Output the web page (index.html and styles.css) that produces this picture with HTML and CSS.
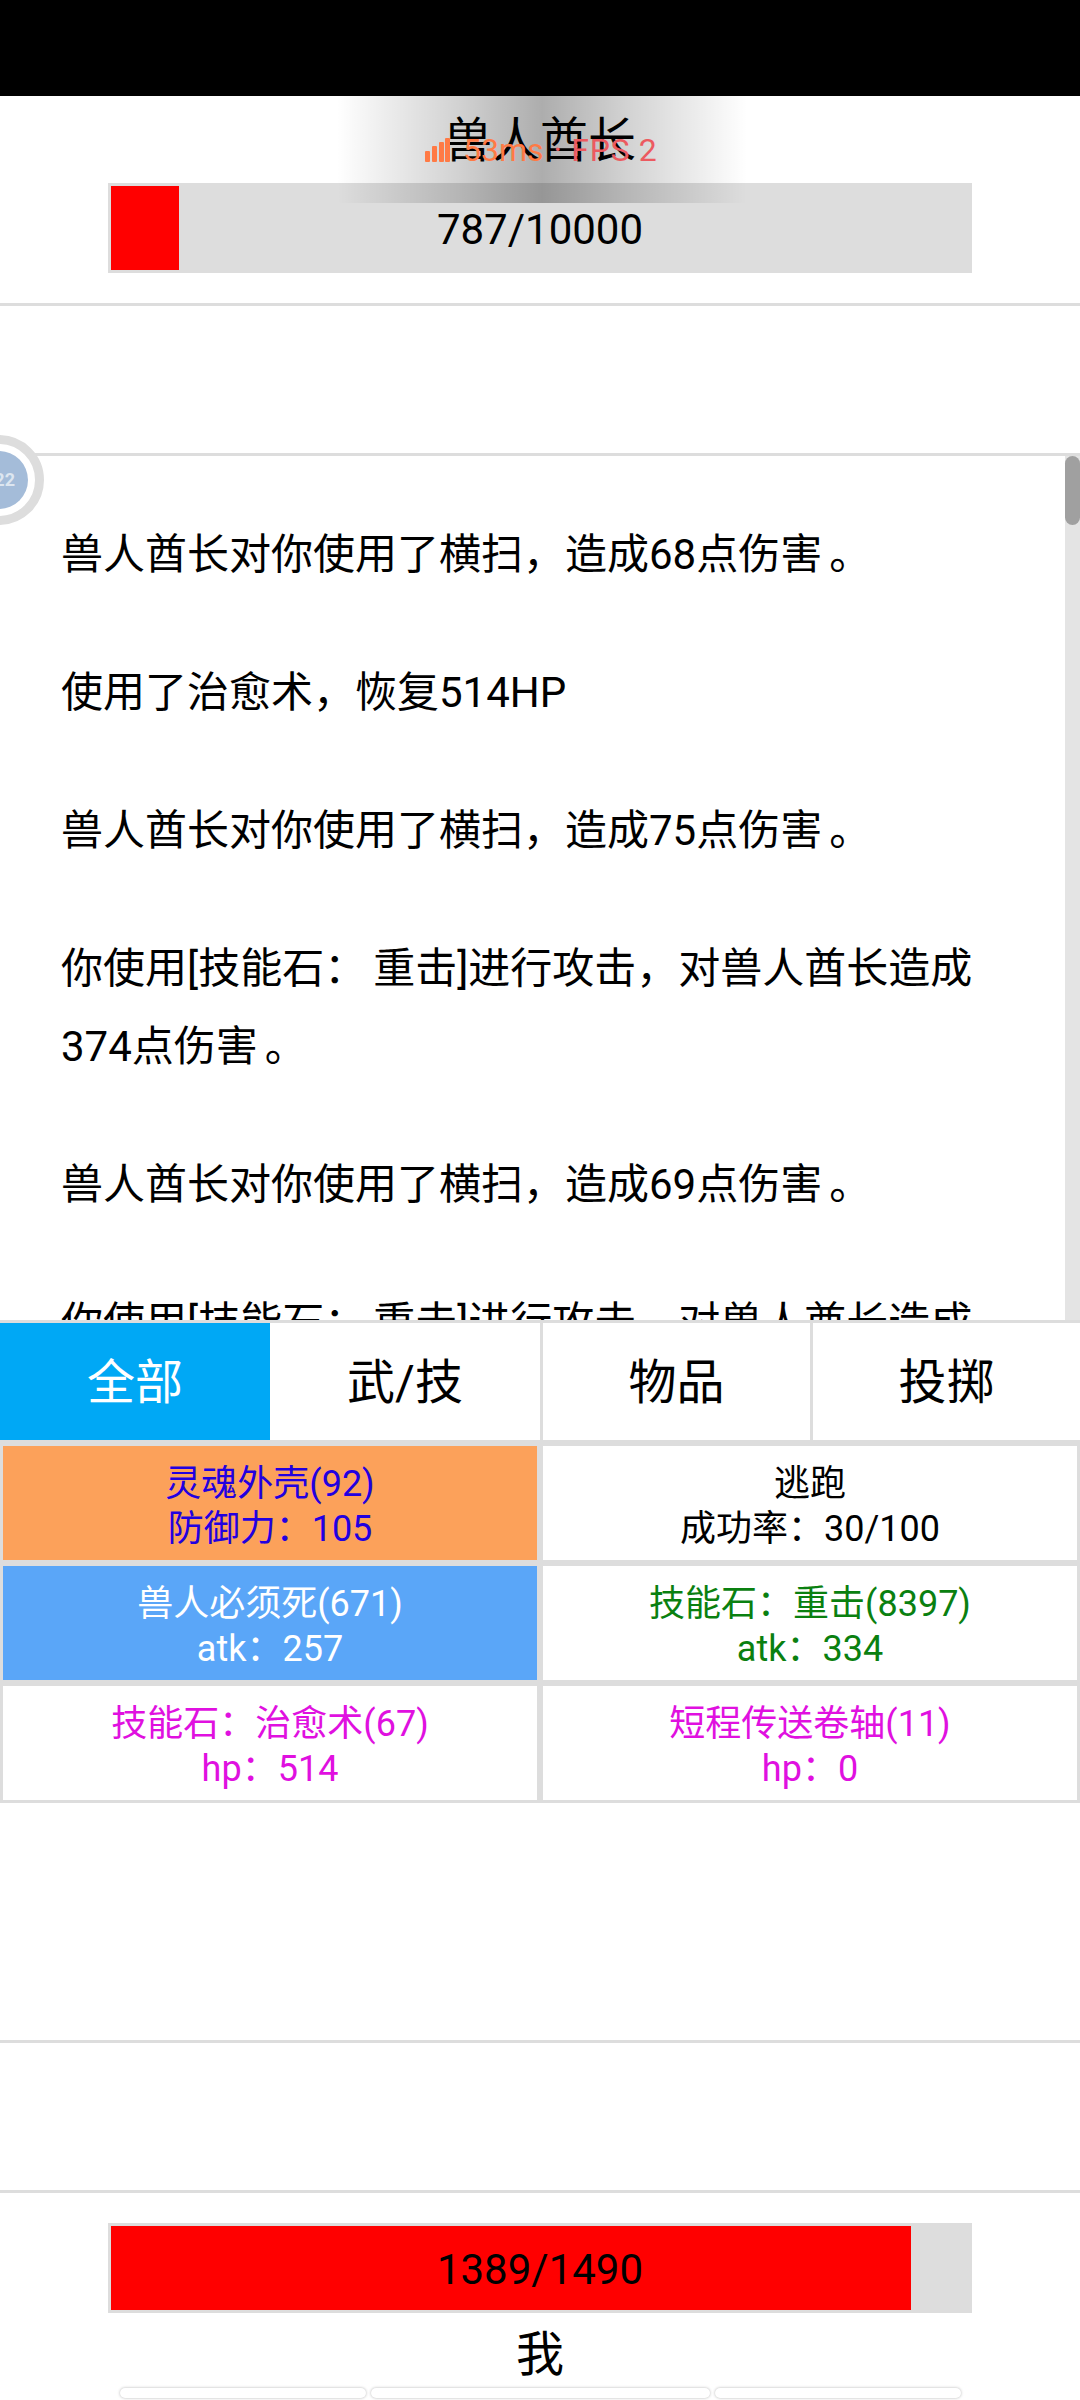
FILE: index.html
```html
<!DOCTYPE html>
<html lang="zh-CN">
<head>
  <meta charset="UTF-8">
  <meta name="viewport" content="width=device-width, initial-scale=1.0">
  <title>兽人酋长</title>
  <link rel="stylesheet" href="styles.css">
</head>
<body>
  <div class="status-bar"></div>

  <section class="enemy">
    <div class="name">兽人酋长</div>
    <div class="hp-bar">
      <div class="hp-fill" style="width: 7.87%"></div>
      <div class="hp-text">787/10000</div>
    </div>
  </section>

  <section class="blank-row"></section>

  <section class="log">
    <div class="log-lines">
      <p>兽人酋长对你使用了横扫，造成68点伤害<span class="stop">。</span></p>
      <p>使用了治愈术，恢复514HP</p>
      <p>兽人酋长对你使用了横扫，造成75点伤害<span class="stop">。</span></p>
      <p>你使用[技能石<span class="colon">：</span>重击]进行攻击，对兽人酋长造成374点伤害<span class="stop">。</span></p>
      <p>兽人酋长对你使用了横扫，造成69点伤害<span class="stop">。</span></p>
      <p>你使用[技能石<span class="colon">：</span>重击]进行攻击，对兽人酋长造成374点伤害<span class="stop">。</span></p>
    </div>
    <div class="scroll-track"><div class="scroll-thumb"></div></div>
  </section>

  <nav class="tabs">
    <div class="tab active">全部</div>
    <div class="tab">武/技</div>
    <div class="tab">物品</div>
    <div class="tab">投掷</div>
  </nav>

  <section class="items">
    <div class="item armor">灵魂外壳(92)<br>防御力<span class="colon">：</span>105</div>
    <div class="item">逃跑<br>成功率<span class="colon">：</span>30/100</div>
    <div class="item weapon">兽人必须死(671)<br>atk<span class="colon">：</span>257</div>
    <div class="item skill">技能石<span class="colon">：</span>重击(8397)<br>atk<span class="colon">：</span>334</div>
    <div class="item magic">技能石<span class="colon">：</span>治愈术(67)<br>hp<span class="colon">：</span>514</div>
    <div class="item magic">短程传送卷轴(11)<br>hp<span class="colon">：</span>0</div>
  </section>

  <section class="spacer-row"></section>
  <section class="blank-row"></section>

  <section class="player">
    <div class="hp-bar">
      <div class="hp-fill" style="width: 93.22%"></div>
      <div class="hp-text">1389/1490</div>
    </div>
    <div class="name me">我</div>
    <div class="menu">
      <div class="menu-btn side"></div>
      <div class="menu-btn mid"></div>
      <div class="menu-btn side"></div>
    </div>
  </section>

  <!-- overlays from the host app -->
  <div class="fps">
    <svg class="fps-icon" width="25" height="24" viewBox="0 0 25 24">
      <rect x="0" y="13" width="5" height="11" rx="1"></rect>
      <rect x="7" y="8" width="5" height="16" rx="1"></rect>
      <rect x="14" y="4" width="5" height="20" rx="1"></rect>
      <rect x="20" y="0" width="5" height="24" rx="1"></rect>
    </svg>
    <span class="fps-ms">53ms</span>
    <span class="fps-count">· FPS 2</span>
  </div>
  <div class="float-ball"><div class="float-core">22</div></div>
</body>
</html>
```

FILE: styles.css
```css
* { box-sizing: border-box; }
html, body { margin: 0; height: 2400px; overflow: hidden; }
body { position: relative; background: #fff; color: #000; font-family: Roboto, "Noto Sans CJK SC", sans-serif; }

.status-bar { height: 96px; background: #000; }

.enemy { height: 210px; border-bottom: 3px solid #ddd; }
.name { height: 87px; line-height: 89px; font-size: 48px; text-align: center; }

.hp-bar { position: relative; width: 864px; height: 90px; margin: 0 auto; padding: 3px; background: #ddd; }
.hp-fill { height: 84px; background: #f00; }
.hp-text { position: absolute; inset: 0; line-height: 94px; font-size: 42px; text-align: center; }

.blank-row { height: 150px; border-bottom: 3px solid #ddd; }

.log { display: flex; height: 864px; overflow: hidden; }
.log-lines { flex: 1; padding: 0 30px 0 61px; font-size: 42px; line-height: 78px; }
.log-lines p { margin: 60px 0; }
.log-lines .colon { margin-right: 7px; }
.stop { padding-left: 7px; }
.colon { font-family: "Noto Sans CJK JP", sans-serif; line-height: 0; }
.scroll-track { width: 15px; background: #e4e4e4; }
.scroll-thumb { height: 69px; border-radius: 8px; background: #a0a0a0; }

.tabs { display: grid; grid-template-columns: repeat(4, 270px); grid-template-rows: 117px; height: 120px; border-top: 3px solid #ddd; }
.tab { height: 117px; padding-top: 1px; line-height: 117px; font-size: 48px; text-align: center; overflow: hidden; }
.tab:nth-child(n+3) { border-left: 3px solid #ddd; }
.tab.active { background: #00a8f5; color: #fff; }

.items { display: grid; grid-template-columns: 1fr 1fr; gap: 6px; padding: 6px 3px 3px; background: #ddd; }
.item { height: 114px; padding-top: 16px; background: #fff; font-size: 36px; line-height: 45px; text-align: center; }
.armor { background: #fca15a; color: #2200e0; }
.weapon { background: #5aa6f8; color: #fff; }
.skill { color: #0a8010; }
.magic { color: #e010e0; }

.spacer-row { height: 240px; border-bottom: 3px solid #ddd; }

.player { padding-top: 30px; }
.me { height: 75px; line-height: 84px; }
.menu { display: flex; justify-content: center; gap: 5px; }
.menu-btn { height: 10px; border-radius: 5px; background: #fff; box-shadow: 0 0 3px rgba(0, 0, 0, 0.3); }
.menu-btn.side { width: 246px; }
.menu-btn.mid { width: 339px; }

.fps { position: absolute; left: 337px; top: 96px; display: flex; align-items: center; width: 410px; height: 107px; padding-left: 88px; background: linear-gradient(90deg, rgba(0, 0, 0, 0), rgba(0, 0, 0, 0.18) 30%, rgba(0, 0, 0, 0.32) 50%, rgba(0, 0, 0, 0.18) 70%, rgba(0, 0, 0, 0)); font-size: 32px; line-height: 54px; white-space: pre; }
.fps-icon { margin-right: 13px; fill: #ff7a45; }
.fps-ms { margin-right: 10px; color: #ff7a45; }
.fps-count { color: #ec5a60; letter-spacing: 0.7px; }

.float-ball { position: absolute; left: -46px; top: 435px; display: flex; align-items: center; justify-content: center; width: 90px; height: 90px; border: 9px solid #ddd; border-radius: 50%; background: #fff; }
.float-core { width: 58px; height: 58px; padding-right: 13px; border-radius: 50%; background: #a4bcd9; color: #dde6f0; font-size: 18px; font-weight: 700; line-height: 58px; text-align: right; }
```
